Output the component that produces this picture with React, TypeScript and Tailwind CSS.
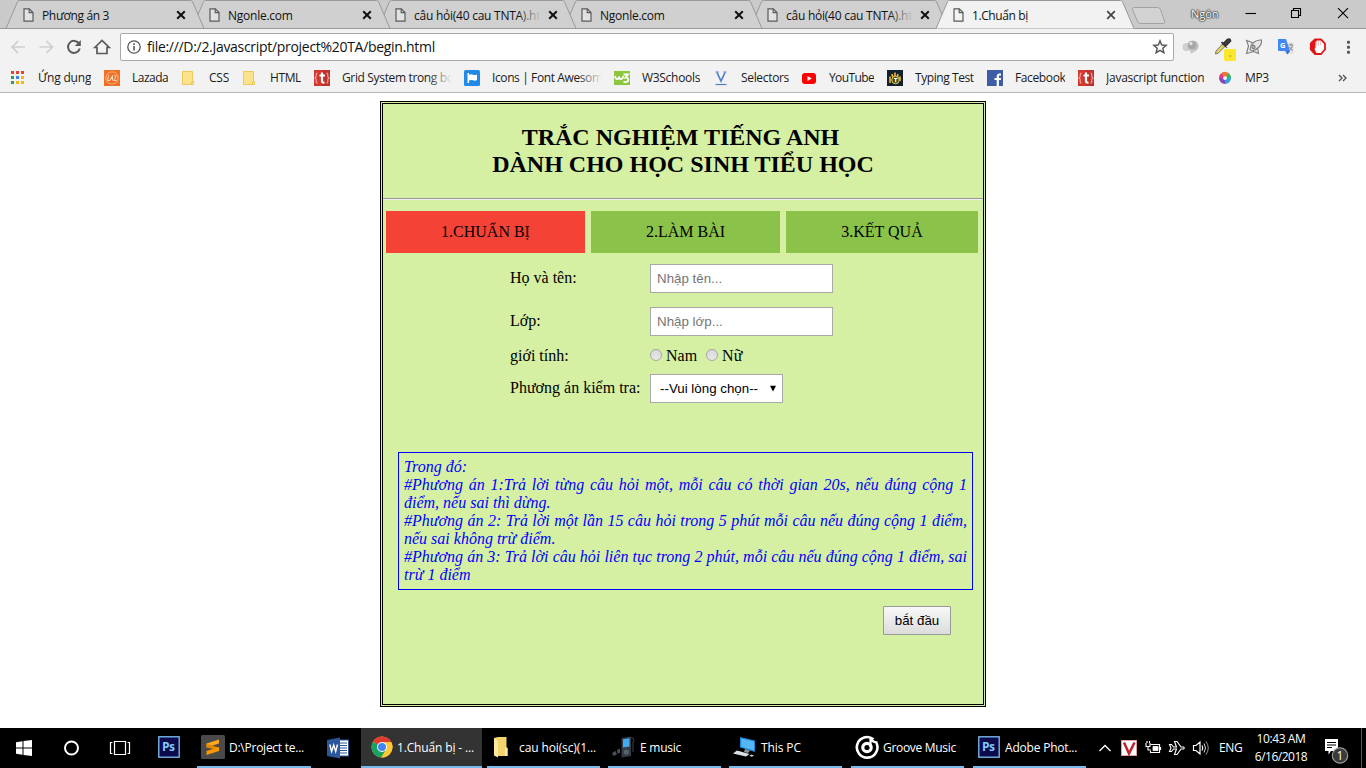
import React from "react";

const UI = "font-['Open_Sans','Noto_Sans',sans-serif]";

/* ---------- Tab strip ---------- */

const FileIcon = () => (
  <svg width="11" height="14" viewBox="0 0 11 14" className="shrink-0">
    <path d="M1 .8H6.3L10 4.5V13.2H1Z" fill="#f4f4f4" fillOpacity=".5" stroke="#5a5a5a" strokeWidth="1.2" />
    <path d="M6.2 .8V4.7H10" fill="none" stroke="#5a5a5a" strokeWidth="1.2" />
  </svg>
);

const CloseIcon = ({ bold }: { bold: boolean }) => (
  <svg width="10" height="10" viewBox="0 0 10 10" className="shrink-0">
    <path d="M1.2 1.2L8.8 8.8M8.8 1.2L1.2 8.8" stroke={bold ? "#111" : "#444"} strokeWidth={bold ? 2 : 1.7} />
  </svg>
);

const tabs = [
  { label: "Phương án 3", z: "z-[9]", track: "tracking-[-0.35px]", fade: false },
  { label: "Ngonle.com", z: "z-[8]", track: "tracking-[-0.25px]", fade: false },
  { label: "câu hỏi(40 cau TNTA).html", z: "z-[7]", track: "tracking-[-0.25px]", fade: true },
  { label: "Ngonle.com", z: "z-[6]", track: "tracking-[-0.25px]", fade: false },
  { label: "câu hỏi(40 cau TNTA).html", z: "z-[5]", track: "tracking-[-0.25px]", fade: true },
  { label: "1.Chuẩn bị", z: "z-10", track: "tracking-[-0.4px]", fade: false, active: true },
];

function TabStrip() {
  return (
    <div className="flex h-[29px] shrink-0 border-b border-[#999] bg-[#cacaca] pl-[6px]">
      {tabs.map((t, i) => (
        <div key={i} className={`relative h-[29px] w-[186px] shrink-0 ${t.z}`}>
          <svg className="absolute top-0 left-0" width="199" height="29" viewBox="0 0 199 29">
            <path
              d="M0 28.5L11.5 1.8Q12 .5 13.5 .5H184.5Q186 .5 186.5 1.8L198 28.5"
              fill={t.active ? "#f2f2f2" : "#d0d0d0"}
              stroke="#999"
            />
            {!t.active && <path d="M0 28.5H198" stroke="#999" />}
          </svg>
          <div className="relative flex h-[29px] items-center pb-[1px] pl-[17px]">
            <span className="mt-[2px] flex"><FileIcon /></span>
            <div className="relative ml-[8px] w-[127px] overflow-hidden whitespace-nowrap">
              <span className={`text-[12px] leading-[20px] text-[#111] ${t.track}`}>{t.label}</span>
              {t.fade && (
                <span className="absolute inset-y-0 right-0 w-[24px] bg-linear-to-r from-[#d0d0d0]/0 to-[#d0d0d0]" />
              )}
            </div>
            <span className="mt-[2px] ml-[7px] flex">
              <CloseIcon bold={!t.active} />
            </span>
          </div>
        </div>
      ))}
      <svg width="36" height="18" viewBox="0 0 36 18" className="mt-[6px] ml-[9px] shrink-0">
        <path d="M2.5 1.5H26.5Q28.5 1.5 29.5 3.5L33.5 15Q34.3 17.5 32 17.5H9Q7.500 17.5 6.500 15.500L1.500 3.500Q.8 1.500 2.500 1.500Z" fill="#d2d2d2" stroke="#a2a2a2" />
      </svg>
      <div className="ml-[24px] w-[30px] pt-[5px] text-[11px] leading-[18px] text-white [text-shadow:0_0_1px_#333,0_0_1px_#333,0_0_2px_#333,0_0_2px_#444]">
        Ngôn
      </div>
      <svg width="110" height="28" viewBox="0 0 110 28" className="ml-[20px] shrink-0" fill="none" stroke="#000" strokeWidth="1.1">
        <path d="M4.500 13.500H15" />
        <path d="M50.500 10.500H57.500V17.500H50.500ZM52.500 10.500V8.500H59.500V15.500H57.500" />
        <path d="M97 8.200L107 18.200M107 8.200L97 18.200" />
      </svg>
    </div>
  );
}

/* ---------- Toolbar ---------- */

function Toolbar() {
  return (
    <div className="flex h-[35px] shrink-0 items-center bg-[#f2f2f2]">
      <svg width="120" height="20" viewBox="0 0 120 20" className="mt-[1px] shrink-0" fill="none" strokeWidth="1.7">
        <path d="M25 10H12.500M18 4L12 10L18 16" stroke="#cfcfcf" />
        <path d="M39.500 10H52M46.500 4L52.500 10L46.500 16" stroke="#cfcfcf" />
        <path d="M79.200 6.800A6 6 0 1 0 79.800 11.500" stroke="#5a5a5a" strokeWidth="2" />
        <path d="M80.800 3V9H74.800Z" fill="#5a5a5a" />
        <path d="M94.800 10.500L102 3.500L109.200 10.500H107V16.500H97V10.500Z" stroke="#5a5a5a" strokeWidth="1.700" />
      </svg>
      <div className="mt-[1px] flex h-[28px] w-[1054px] shrink-0 items-center rounded-[2px] border border-[#a8a8a8] bg-white pl-[6px]">
        <svg width="14" height="14" viewBox="0 0 14 14" className="shrink-0">
          <circle cx="7" cy="7" r="6.200" fill="none" stroke="#555" strokeWidth="1.300" />
          <path d="M7 6V10.500M7 3.300V4.900" stroke="#555" strokeWidth="1.600" />
        </svg>
        <span className="ml-[6px] text-[14px] leading-[20px] tracking-[-0.3px] text-[#111]">
          file:///D:/2.Javascript/project%20TA/begin.html
        </span>
        <svg width="16" height="16" viewBox="0 0 16 16" className="mr-[5px] ml-auto">
          <path d="M8 1.800L9.700 6L14.200 6.300L10.800 9.200L11.900 13.700L8 11.300L4.100 13.700L5.200 9.200L1.800 6.300L6.300 6Z" fill="none" stroke="#555" strokeWidth="1.400" />
        </svg>
      </div>
      <svg width="192" height="35" viewBox="0 0 192 35" className="shrink-0">
        <g>
          <circle cx="12.500" cy="18" r="4" fill="#cfcfcf" />
          <circle cx="19" cy="17" r="5.500" fill="#bdbdbd" />
          <circle cx="18" cy="16" r="4" fill="#a6a6a6" />
          <circle cx="17" cy="14.500" r="1.700" fill="#e2e2e2" />
          <path d="M15 20L22 21L17.500 25Z" fill="#c8c8c8" />
        </g>
        <g>
          <path d="M41.500 25L42 22L49 14.500L51.500 17L44 24.300Z" fill="#e6d05c" stroke="#777" strokeWidth="1" />
          <path d="M47.500 13L53 18.500M49 15L53.500 10.500Q56 9 56.500 12L51.500 17Z" stroke="#333" strokeWidth="1.700" fill="#444" />
          <rect x="50" y="20" width="12" height="12" rx="1.500" fill="#fbe72e" />
          <path d="M55 27H57.500" stroke="#b1a322" />
        </g>
        <g fill="#ececec" stroke="#7c7c7c" strokeWidth="1.100">
          <path d="M77 13L72.500 11.500L74.500 17L72.500 24.500L80 22.500L84.500 24.500L83.500 18.500Z" />
          <path d="M76 20.500Q76.500 16 79.500 13.500Q83 10.500 87.500 11Q88 15.500 84.500 18.500Q82 21 78 22Z" fill="#e6e6e6" />
          <circle cx="79.500" cy="18" r="1.600" fill="#bbb" />
        </g>
        <g>
          <rect x="110" y="13.500" width="9.500" height="11.500" fill="#e2e2e2" />
          <path d="M104 10H112L116 22H105Q104 22 104 21Z" fill="#4285f4" />
          <path d="M111.500 22H116L113.500 25.500Z" fill="#3367d6" />
          <text x="106" y="18.500" fontSize="7.500" fontWeight="700" fill="#fff" fontFamily="Open Sans">G</text>
          <path d="M114.500 16H119M117 14.500V16M118.500 16.500Q118 19.500 115.500 21M115.500 18Q116.500 20.500 119 21.500" stroke="#888" fill="none" />
        </g>
        <g>
          <path d="M141 10.500H147L151 14.500V20.500L147 25H141L136.800 20.500V14.500Z" fill="#fff" stroke="#e01616" strokeWidth="1.800" />
          <path d="M137 14L141 10.500H144L141.500 13V18.500L140.500 20L143 25H141L137 21.500Z" fill="#e01616" />
          <path d="M142.500 12.500V16.500M144.500 11V16.500M146.500 12.500V16.500" stroke="#e98383" strokeWidth=".5" />
        </g>
        <g fill="#555">
          <rect x="173" y="11.800" width="3" height="3" rx="1" />
          <rect x="173" y="16.800" width="3" height="3" rx="1" />
          <rect x="173" y="21.800" width="3" height="3" rx="1" />
        </g>
      </svg>
    </div>
  );
}

/* ---------- Bookmarks ---------- */

const Folder = () => (
  <svg width="16" height="16" viewBox="0 0 16 16">
    <path d="M1.500 1.500H11.500V11.500H12.500V14.500H1.500Z" fill="#fbe38c" stroke="#ecc95a" />
    <path d="M10.500 14.500V12H12.500" fill="none" stroke="#ecc95a" />
  </svg>
);

const AppsIcon = () => (
  <svg width="16" height="16" viewBox="0 0 16 16">
    <g fill="#e8412f"><path d="M1 1h3v3H1zM6 1h3v3H6zM11 1h3v3h-3z" /></g>
    <path d="M1 6h3v3H1zM1 11h3v3H1z" fill="#2e9e52" />
    <path d="M6 6h3v3H6z" fill="#3f80ea" />
    <path d="M11 6h3v3h-3zM6 11h3v3H6zM11 11h3v3h-3z" fill="#f3b51c" />
  </svg>
);

const LazadaIcon = () => (
  <svg width="16" height="16" viewBox="0 0 16 16">
    <rect width="16" height="16" fill="#f36f21" />
    <circle cx="8" cy="8" r="6.200" fill="none" stroke="#fbb98c" />
    <path d="M4.500 5L3.800 10.500H6L8.500 5.500L8.500 10.500M7 8.500H9M10 6Q12.500 4.500 12 6.500L9.800 10.500H12.500" fill="none" stroke="#fde0ca" strokeWidth=".9" />
  </svg>
);

const TIcon = () => (
  <svg width="16" height="16" viewBox="0 0 16 16">
    <rect width="16" height="16" fill="#d3382f" />
    <path d="M8 0H16V16H8Z" fill="#bf322b" />
    <path d="M8 2.500V11Q8 13 10.500 12.500M5.500 5.500H11" fill="none" stroke="#fff" strokeWidth="2.200" />
    <path d="M3.500 3Q2 3 2.200 5.500Q2.400 7.500 1 8Q2.400 8.500 2.200 10.500Q2 13 3.500 13M12.500 3Q14 3 13.800 5.500Q13.600 7.500 15 8Q13.600 8.500 13.800 10.500Q14 13 12.500 13" fill="none" stroke="#f3aaa5" strokeWidth="1.100" />
  </svg>
);

const FlagIcon = () => (
  <svg width="16" height="16" viewBox="0 0 16 16">
    <rect width="16" height="16" rx="1.500" fill="#228ae6" />
    <path d="M3.500 3V13H5V10.500Q7 9.500 9 10.300T13 10V4.500Q11 5.500 9 4.700T5 4.800V3Z" fill="#fff" />
  </svg>
);

const W3Icon = () => (
  <svg width="16" height="16" viewBox="0 0 16 16">
    <rect width="16" height="14" y="1" fill="#8cc63f" />
    <path d="M1 6Q1.500 9 3.200 9Q5 9 5 6.500Q5 9 7 9Q9 9 9.300 6M9.500 4.500H14L11.500 7.500Q14.500 7.500 14.300 10Q14 12.500 9.500 12" fill="none" stroke="#fff" strokeWidth="1.800" />
  </svg>
);

const VIcon = () => (
  <svg width="16" height="16" viewBox="0 0 16 16" fill="none" stroke="#4f7fca">
    <path d="M4 2.500L8 11L12 2.500" strokeWidth="1.700" />
    <path d="M2.500 2H5.800M10.500 2H13.500" strokeWidth="1" />
    <path d="M2.500 14.500H13.500" strokeWidth="1.200" />
  </svg>
);

const YouTubeIcon = () => (
  <svg width="16" height="16" viewBox="0 0 16 16">
    <rect x="1" y="3" width="14" height="11" rx="3" fill="#f00" />
    <path d="M6.500 6V11L10.800 8.500Z" fill="#fff" />
  </svg>
);

const TypingIcon = () => (
  <svg width="16" height="16" viewBox="0 0 16 16">
    <rect width="16" height="16" fill="#12212b" />
    <path d="M3 6.500V13M13 6.500V11M5 4L6 8M11 4L10 8M8 2.500V6" stroke="#e9b03b" strokeWidth="1.700" />
    <circle cx="8.500" cy="10" r="3.800" fill="#47511f" stroke="#e4cb55" />
    <path d="M7 8.500H10.500M8.700 8.500V12.300" stroke="#fff" strokeWidth="1.100" />
  </svg>
);

const FacebookIcon = () => (
  <svg width="16" height="16" viewBox="0 0 16 16">
    <rect width="16" height="16" fill="#3d5da7" />
    <path d="M10.800 16V6.500Q10.800 4.500 12.500 4.500H14M7.500 9H14" fill="none" stroke="#fff" strokeWidth="2.200" />
  </svg>
);

const Mp3Icon = () => (
  <svg width="16" height="16" viewBox="0 0 16 16" fill="none" strokeWidth="4">
    <path d="M8 4A4 4 0 0 0 4 8" stroke="#e6358b" />
    <path d="M4 8A4 4 0 0 0 8 12" stroke="#8a44b8" />
    <path d="M8 12A4 4 0 0 0 12 8" stroke="#28a5dd" />
    <path d="M12 8A4 4 0 0 0 10 4.500" stroke="#32b566" />
    <path d="M10.500 4.900A4 4 0 0 0 5.500 4.900" stroke="#f0742c" />
  </svg>
);

const bookmarks = [
  { icon: <AppsIcon />, label: "Ứng dụng", cls: "w-[94px]", track: "tracking-[-0.2px]" },
  { icon: <LazadaIcon />, label: "Lazada", cls: "w-[77px]", track: "tracking-[-0.5px]" },
  { icon: <Folder />, label: "CSS", cls: "w-[61px]", track: "tracking-[-0.2px]" },
  { icon: <Folder />, label: "HTML", cls: "w-[72px]", track: "tracking-[-0.4px]" },
  { icon: <TIcon />, label: "Grid System trong bootstrap", cls: "w-[150px]", track: "tracking-[-0.35px]", fade: true },
  { icon: <FlagIcon />, label: "Icons | Font Awesome", cls: "w-[150px]", track: "tracking-[-0.39px]", fade: true },
  { icon: <W3Icon />, label: "W3Schools", cls: "w-[99px]", track: "tracking-[-0.3px]" },
  { icon: <VIcon />, label: "Selectors", cls: "w-[88px]", track: "tracking-[-0.33px]" },
  { icon: <YouTubeIcon />, label: "YouTube", cls: "w-[86px]", track: "tracking-[-0.6px]" },
  { icon: <TypingIcon />, label: "Typing Test", cls: "w-[100px]", track: "tracking-[-0.42px]" },
  { icon: <FacebookIcon />, label: "Facebook", cls: "w-[91px]", track: "tracking-[-0.38px]" },
  { icon: <TIcon />, label: "Javascript function", cls: "w-[139px]", track: "tracking-[-0.25px]" },
  { icon: <Mp3Icon />, label: "MP3", cls: "w-[120px]", track: "tracking-[-0.4px]" },
];

function Bookmarks() {
  return (
    <div className="flex h-[29px] shrink-0 items-center border-b border-[#b6b6b6] bg-[#f2f2f2] pl-[10px]">
      {bookmarks.map((b) => (
        <div key={b.label + b.cls} className={`flex shrink-0 items-center ${b.cls}`}>
          <span className="block w-[16px] shrink-0">{b.icon}</span>
          <div className="relative ml-[12px] max-w-[110px] overflow-hidden whitespace-nowrap">
            <span className={`block text-[12px] leading-[18px] text-[#1a1a1a] ${b.track}`}>{b.label}</span>
            {b.fade && (
              <span className="absolute inset-y-0 right-0 w-[24px] bg-linear-to-r from-[#f2f2f2]/0 to-[#f2f2f2]" />
            )}
          </div>
        </div>
      ))}
      <svg width="10" height="8" viewBox="0 0 10 8" className="ml-[1px]" fill="none" stroke="#555" strokeWidth="1.400">
        <path d="M1 1L4 4L1 7M5 1L8 4L5 7" />
      </svg>
    </div>
  );
}

/* ---------- Page ---------- */

const Radio = ({ label }: { label: string }) => (
  <label className="flex items-center">
    <span className="mb-[3px] block h-[12px] w-[12px] rounded-full border border-[#a5a5a5] bg-linear-to-b from-[#d9d9d9] to-[#e9e9e9]" />
    <span className="ml-[4px]">{label}</span>
  </label>
);

function Quiz() {
  return (
    <main className="flex-1 bg-white pt-[8px] pl-[380px]">
      <div className="h-[606px] w-[606px] border-[3px] border-double border-black bg-[#d5f0a3] font-['Liberation_Serif',serif] text-[16px] leading-[18px] text-black">
        <h2 className="pt-[20px] text-center text-[24px] leading-[27px] font-bold">
          <span className="pr-[5px]">TRẮC NGHIỆM TIẾNG ANH</span>
          <br />
          DÀNH CHO HỌC SINH TIỂU HỌC
        </h2>
        <div className="mt-[20px] h-[2px] border-t border-b border-t-[#999] border-b-[#eee]" />
        <div className="mt-[11px] flex h-[42px] gap-[6px] pl-[3px] leading-[42px]">
          <div className="w-[199px] bg-[#f44336] text-center">1.CHUẨN BỊ</div>
          <div className="w-[189px] bg-[#8bc34a] text-center">2.LÀM BÀI</div>
          <div className="w-[192px] bg-[#8bc34a] text-center">3.KẾT QUẢ</div>
        </div>
        <div className="mt-[11px] ml-[127px] grid grid-cols-[140px_183px] grid-rows-[29px_43px_42px_43px]">
          <span className="pt-[5px]">Họ và tên:</span>
          <input placeholder="Nhập tên..." className="h-[29px] w-[183px] border border-[#a9a9a9] bg-white px-[6px] font-['Liberation_Sans',sans-serif] text-[13.333px] placeholder:text-[#757575]" />
          <span className="pt-[19px]">Lớp:</span>
          <input placeholder="Nhập lớp..." className="mt-[14px] h-[29px] w-[183px] border border-[#a9a9a9] bg-white px-[6px] font-['Liberation_Sans',sans-serif] text-[13.333px] placeholder:text-[#757575]" />
          <span className="mt-[11px] h-[18px]">giới tính:</span>
          <div className="mt-[11px] flex h-[18px] gap-[9px]">
            <Radio label="Nam" />
            <Radio label="Nữ" />
          </div>
          <span className="mt-[-4px] pt-[5px] whitespace-nowrap">Phương án kiểm tra:</span>
          <div className="mt-[-4px] flex h-[29px] w-[133px] items-center border border-[#a9a9a9] bg-white pl-[9px] font-['Liberation_Sans',sans-serif] text-[13.333px]">
            --Vui lòng chọn--
            <svg width="6" height="7" viewBox="0 0 6 7" className="mr-[6px] mb-[1px] ml-auto">
              <path d="M0 .8H6L3 6.500Z" fill="#000" />
            </svg>
          </div>
        </div>
        <div className="mt-[31px] ml-[15px] h-[138px] w-[575px] border border-[#00f] p-[5px] text-justify text-[#00f] italic">
          Trong đó:
          <br />
          #Phương án 1:Trả lời từng câu hỏi một, mỗi câu có thời gian 20s, nếu đúng cộng 1 điểm, nếu sai thì dừng.
          <br />
          #Phương án 2: Trả lời một lần 15 câu hỏi trong 5 phút mỗi câu nếu đúng cộng 1 điểm, nếu sai không trừ điểm.
          <br />
          #Phương án 3: Trả lời câu hỏi liên tục trong 2 phút, mỗi câu nếu đúng cộng 1 điểm, sai trừ 1 điểm
        </div>
        <button className="mt-[16px] ml-[500px] block h-[29px] w-[68px] rounded-[1px] border border-[#999] bg-linear-to-b from-[#f8f8f8] to-[#dcdcdc] font-['Liberation_Sans',sans-serif] text-[13.333px]">
          bắt đầu
        </button>
      </div>
    </main>
  );
}

/* ---------- Taskbar ---------- */

const PsIcon = () => (
  <svg width="22" height="22" viewBox="0 0 22 22">
    <rect x=".8" y=".8" width="20.400" height="20.400" fill="#0a0a4c" stroke="#7fc0f5" strokeWidth="1.300" />
    <text x="4" y="15" fontSize="12" fontWeight="700" fill="#7fc8fa" fontFamily="Open Sans" letterSpacing="-.5">Ps</text>
  </svg>
);

const SublimeIcon = () => (
  <svg width="24" height="24" viewBox="0 0 24 24">
    <rect width="24" height="24" rx="1.500" fill="#4a4a4a" />
    <path d="M5.500 8.500L18 4.500V8.500L5.500 12.500Z" fill="#ffa820" />
    <path d="M5.500 8.700L18 12.500V16L5.500 12.300Z" fill="#e08a00" />
    <path d="M5.500 16L18 12.200V16L5.500 20Z" fill="#ff9800" />
  </svg>
);

const WordIcon = () => (
  <svg width="22" height="22" viewBox="0 0 22 22">
    <rect x="12" y="3" width="9.500" height="16" fill="#fff" stroke="#2b579a" />
    <path d="M13 6H20M13 8.500H20M13 11H20M13 13.500H20M13 16H20" stroke="#2b579a" />
    <path d="M0 3L13 .5V21.500L0 19Z" fill="#2b579a" />
    <path d="M2.800 7.500L4.600 14.500L6.700 8L8.700 14.500L10.500 7.500" fill="none" stroke="#fff" strokeWidth="1.400" />
  </svg>
);

const ChromeIcon = () => (
  <svg width="22" height="22" viewBox="0 0 22 22">
    <circle cx="11" cy="11" r="10.500" fill="#fcc934" />
    <path d="M11 11L1.900 5.750A10.500 10.500 0 0 1 20.300 6.200H11Z" fill="#e33b2e" />
    <path d="M1.900 5.750A10.500 10.500 0 0 0 10.300 21.500L15.200 13.400L11 11Z" fill="#1aa260" />
    <path d="M11 6.200H20.300A10.500 10.500 0 0 1 10.300 21.500L15.200 13.400Z" fill="#fcc934" />
    <circle cx="11" cy="11" r="5" fill="#fff" />
    <circle cx="11" cy="11" r="4" fill="#4285f4" />
  </svg>
);

const TaskFolder = () => (
  <svg width="22" height="22" viewBox="0 0 22 22">
    <path d="M1 2L5 1H13.500V11L14.500 12V20H4Z" fill="#f5d470" />
    <path d="M1 2L5 4.500V21.500L1 19.500Z" fill="#fde9a0" />
    <path d="M12 12H14.500V20H12Z" fill="#fbe9ad" />
  </svg>
);

const MusicDevice = () => (
  <svg width="24" height="24" viewBox="0 0 24 24">
    <path d="M17 5Q18 2 20.500 3Q22.500 4 21 8V17" fill="none" stroke="#333" strokeWidth="1.300" />
    <path d="M9.500 3L19 1.500V21L9.500 22.500Z" fill="#333c46" />
    <path d="M11 4.200L17.500 3.200V11.500L11 12.500Z" fill="#45a9ee" />
    <circle cx="14.300" cy="17" r="2.600" fill="#59626b" />
    <path d="M0 18L3.500 16L5 19.500L1.500 21ZM5 15L8 13.500V18L5.500 18.500Z" fill="#4a4f54" />
  </svg>
);

const PcIcon = () => (
  <svg width="24" height="22" viewBox="0 0 24 22">
    <path d="M7 1L22 4.500V16L7 11.500Z" fill="#1c87d8" />
    <path d="M8.200 2.500L21 5.500V14.500L8.200 10.700Z" fill="#55b7f5" />
    <path d="M12 13L17 14.500L15 17L11 16Z" fill="#8d9499" />
    <path d="M4 14.500L16.500 18L13 20.500L0 17.500Z" fill="#dbe0e3" />
    <path d="M18 18.500L21 19.500L19 20.800L16.500 20Z" fill="#cfd4d8" />
  </svg>
);

const GrooveIcon = () => (
  <svg width="24" height="24" viewBox="0 0 24 24" fill="none" stroke="#fff">
    <path d="M18.500 4.200A10.300 10.300 0 1 0 21.500 8" strokeWidth="2.600" />
    <circle cx="12" cy="12.500" r="4.200" strokeWidth="3.200" />
    <path d="M15.500 12V3.500Q17 7 22.500 7.500" strokeWidth="2.200" />
  </svg>
);

const tasks = [
  { icon: <MusicDevice />, label: "E music", track: "tracking-[-0.25px]", box: "ml-[8px] pl-[4px]", text: "ml-[4px]" },
  { icon: <PcIcon />, label: "This PC", track: "tracking-[-0.1px]", box: "ml-[8px] pl-[4px]", text: "ml-[4px]" },
  { icon: <GrooveIcon />, label: "Groove Music", track: "tracking-[-0.3px]", box: "ml-[9px] pl-[4px]", text: "ml-[4px]" },
  { icon: <PsIcon />, label: "Adobe Phot...", track: "tracking-[-0.2px]", box: "ml-[9px] pl-[5px]", text: "ml-[5px]" },
];

const taskBase = "flex h-[40px] shrink-0 items-center border-b-2 border-[#76b9ed] whitespace-nowrap";

function Taskbar() {
  return (
    <footer className="flex h-[40px] shrink-0 items-center bg-black text-[12px] leading-[18px] text-white">
      <svg width="158" height="40" viewBox="0 0 158 40" className="shrink-0">
        <path d="M16 14.200L22.500 13.200V19.500H16ZM23.500 13L32 12V19.500H23.500ZM16 20.500H22.500V26.800L16 25.800ZM23.500 20.500H32V28L23.500 27Z" fill="#fff" />
        <circle cx="71.500" cy="20" r="6.500" fill="none" stroke="#fff" strokeWidth="2" />
        <path d="M114.500 13.500H125.500V26.500H114.500ZM112.500 14.500H110.500V25.500H112.500M127.500 14.500H129.500V25.500H127.500" fill="none" stroke="#fff" strokeWidth="1.200" />
      </svg>
      <span className="mb-[2px] flex w-[39px] shrink-0"><PsIcon /></span>
      <div className={`w-[114px] pl-[4px] ${taskBase}`}>
        <SublimeIcon />
        <span className="ml-[4px] pt-[1px] tracking-[-0.25px]">D:\Project te...</span>
      </div>
      <span className="ml-[16px] flex w-[34px] shrink-0"><WordIcon /></span>
      <div className={`w-[121px] bg-[#333] pl-[10px] ${taskBase}`}>
        <ChromeIcon />
        <span className="ml-[4px] pt-[1px] tracking-[-0.15px]">1.Chuẩn bị - ...</span>
      </div>
      <div className={`ml-[5px] w-[113px] pl-[6px] ${taskBase}`}>
        <TaskFolder />
        <span className="ml-[4px] pt-[1px] tracking-[-0.12px]">cau hoi(sc)(1...</span>
      </div>
      {tasks.map((t) => (
        <div key={t.label} className={`w-[113px] ${t.box} ${taskBase}`}>
          {t.icon}
          <span className={`pt-[1px] ${t.text} ${t.track}`}>{t.label}</span>
        </div>
      ))}
      <svg width="126" height="40" viewBox="0 0 126 40" className="ml-[6px] shrink-0" fill="none" stroke="#fff">
        <path d="M7.500 23L13 17.500L18.500 23" strokeWidth="1.300" />
        <rect x="29.500" y="12.500" width="15" height="15" fill="#fff" stroke="#d9a0a0" />
        <path d="M32 14.500L37 25.500L42.500 14.500" stroke="#c2222b" strokeWidth="2.500" />
        <path d="M58.500 16.500H67.500V24.500H58.500V23M68.500 19V22" strokeWidth="1.200" />
        <path d="M61 18.500H66V22.500H61Z" fill="#fff" strokeWidth=".8" />
        <path d="M54 15V18.500H58V15M56 18.500V22H59M55 15V13M57.500 15V13" strokeWidth="1.100" />
        <path d="M77.500 16.500H79.500L81.500 19H84.500L82.500 13.500H85L89 19H91.500Q93 20 91.500 21H89L85 26.500H82.500L84.500 21H81.500L79.500 23.500H77.500L79 20Z" strokeWidth="1.100" />
        <path d="M101.500 17.500H104L108 14V26L104 22.500H101.500ZM110 17.500Q111.500 20 110 22.500" strokeWidth="1.200" />
        <path d="M112 15.500Q115 20 112 24.500" stroke="#ddd" />
        <path d="M114 13.500Q118.500 20 114 26.500" stroke="#999" />
      </svg>
      <span className="w-[30px] shrink-0 pl-[1px] tracking-[-0.4px]">ENG</span>
      <div className="ml-[6px] w-[54px] shrink-0 pb-[1px] text-center whitespace-nowrap">
        <div className="tracking-[-0.4px]">10:43 AM</div>
        <div className="tracking-[-0.5px]">6/16/2018</div>
      </div>
      <svg width="50" height="40" viewBox="0 0 50 40" className="ml-[8px] shrink-0">
        <path d="M9 11H22V23H15L12.500 26.500V23H9Z" fill="#fff" />
        <path d="M11 14.500H20M11 17H20M11 19.500H16" stroke="#000" />
        <circle cx="24" cy="27.500" r="7.700" fill="#3a3a3a" stroke="#999" strokeWidth="1.200" />
        <text x="24" y="32" textAnchor="middle" fontSize="12" fill="#fff" fontFamily="Open Sans">1</text>
        <path d="M45.500 0V40" stroke="#555" />
      </svg>
    </footer>
  );
}

export default function App() {
  return (
    <div className={`flex h-screen w-[1366px] flex-col overflow-hidden bg-white ${UI}`}>
      <TabStrip />
      <Toolbar />
      <Bookmarks />
      <Quiz />
      <Taskbar />
    </div>
  );
}
